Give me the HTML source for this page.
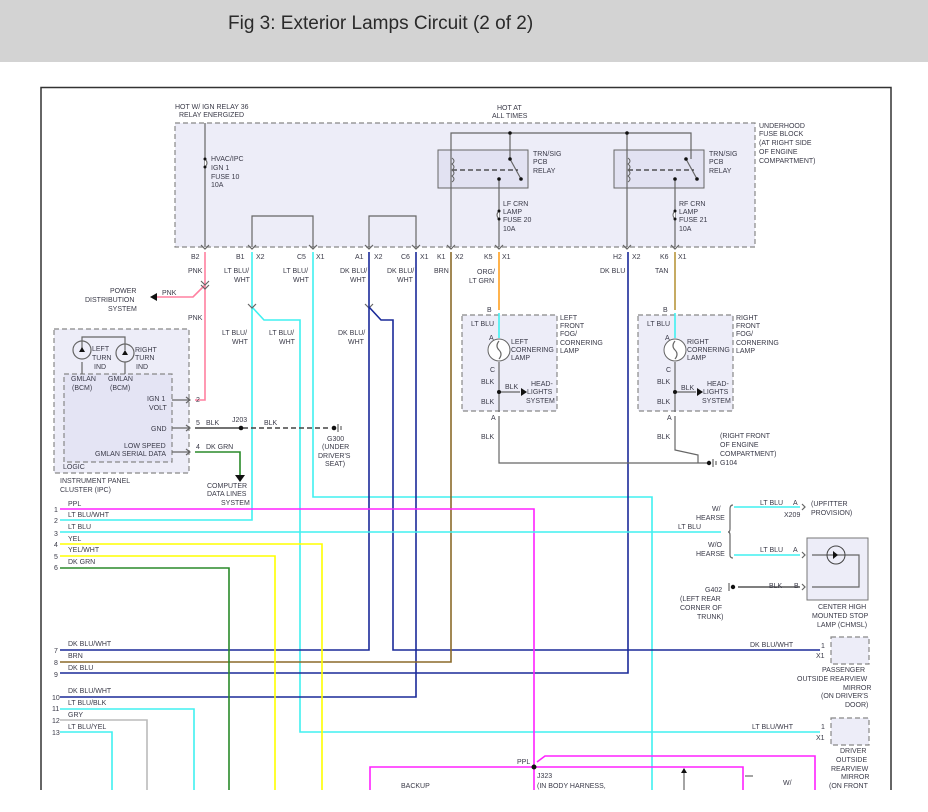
<!DOCTYPE html>
<html><head><meta charset="utf-8"><style>
html,body{margin:0;padding:0;background:#fff;width:928px;height:812px;overflow:hidden}
svg{display:block}
text{font-family:"Liberation Sans",sans-serif;font-size:7px;fill:#3a3a48}
.t{font-size:19px;fill:#2a2a2a}
.w{fill:none;stroke-width:1.6}
.g{stroke:#666;fill:none;stroke-width:1.2}
.d{stroke:#888;stroke-dasharray:5 3;stroke-width:1.2}
</style></head><body>
<svg width="928" height="812" viewBox="0 0 928 812" xmlns="http://www.w3.org/2000/svg">
<rect x="0" y="0" width="928" height="62" fill="#d3d3d3"/>
<text class="t" x="228" y="29">Fig 3: Exterior Lamps Circuit (2 of 2)</text>
<path d="M41 812 V87.5 H891 V812" fill="none" stroke="#333" stroke-width="1.5"/>
<rect x="0" y="790" width="928" height="22" fill="#fff"/>

<!-- fuse block -->
<rect x="175" y="123" width="580" height="124" fill="#ededf8" class="d"/>
<rect x="438" y="150" width="90" height="38" fill="#e2e2f2" stroke="#666"/>
<rect x="614" y="150" width="90" height="38" fill="#e2e2f2" stroke="#666"/>
<g class="g">
<path d="M205 123 V247"/>
<path d="M252 247 V216 H313 V247"/>
<path d="M369 247 V216 H416 V247"/>
<path d="M451 247 V133 H691 V159"/>
<path d="M510 133 V159"/>
<path d="M627 133 V247"/>
<path d="M510 159 L521 179"/><path d="M686 159 L697 179"/>
<path d="M499 179 V247"/><path d="M675 179 V247"/>
</g>
<path d="M452 170 H518 M628 170 H694" stroke="#333" stroke-dasharray="5 3" stroke-width="1.2"/>
<path d="M452 158 q4 3 0 6 q4 3 0 6 q4 3 0 6 q4 3 0 6 M628 158 q4 3 0 6 q4 3 0 6 q4 3 0 6 q4 3 0 6" stroke="#666" fill="none"/>
<path d="M205 159 q4 4 0 8 M499 211 q-4 4 0 8 M675 211 q-4 4 0 8" stroke="#666" fill="#fff"/>
<g fill="#111"><circle cx="510" cy="133" r="1.8"/><circle cx="627" cy="133" r="1.8"/><circle cx="510" cy="159" r="1.8"/><circle cx="521" cy="179" r="1.8"/><circle cx="686" cy="159" r="1.8"/><circle cx="697" cy="179" r="1.8"/><circle cx="499" cy="179" r="1.8"/><circle cx="675" cy="179" r="1.8"/><circle cx="205" cy="159" r="1.5"/><circle cx="205" cy="167" r="1.5"/><circle cx="499" cy="211" r="1.5"/><circle cx="499" cy="219" r="1.5"/><circle cx="675" cy="211" r="1.5"/><circle cx="675" cy="219" r="1.5"/></g>
<text x="175" y="109">HOT W/ IGN RELAY 36</text><text x="179" y="117">RELAY ENERGIZED</text>
<text x="497" y="110">HOT AT</text><text x="492" y="118">ALL TIMES</text>
<text x="211" y="161">HVAC/IPC</text><text x="211" y="170">IGN 1</text><text x="211" y="179">FUSE 10</text><text x="211" y="187">10A</text>
<text x="533" y="156">TRN/SIG</text><text x="533" y="164">PCB</text><text x="533" y="173">RELAY</text>
<text x="709" y="156">TRN/SIG</text><text x="709" y="164">PCB</text><text x="709" y="173">RELAY</text>
<text x="503" y="206">LF CRN</text><text x="503" y="214">LAMP</text><text x="503" y="222">FUSE 20</text><text x="503" y="231">10A</text>
<text x="679" y="206">RF CRN</text><text x="679" y="214">LAMP</text><text x="679" y="222">FUSE 21</text><text x="679" y="231">10A</text>
<text x="759" y="128">UNDERHOOD</text><text x="759" y="136">FUSE BLOCK</text><text x="759" y="145">(AT RIGHT SIDE</text><text x="759" y="154">OF ENGINE</text><text x="759" y="163">COMPARTMENT)</text>
<text x="191" y="259">B2</text><text x="236" y="259">B1</text><text x="256" y="259">X2</text><text x="297" y="259">C5</text><text x="316" y="259">X1</text><text x="355" y="259">A1</text><text x="374" y="259">X2</text><text x="401" y="259">C6</text><text x="420" y="259">X1</text><text x="437" y="259">K1</text><text x="455" y="259">X2</text><text x="484" y="259">K5</text><text x="502" y="259">X1</text><text x="613" y="259">H2</text><text x="632" y="259">X2</text><text x="660" y="259">K6</text><text x="678" y="259">X1</text>
<g class="g"><path d="M201 245 l4 4 4-4 M248 245 l4 4 4-4 M309 245 l4 4 4-4 M365 245 l4 4 4-4 M412 245 l4 4 4-4 M447 245 l4 4 4-4 M495 245 l4 4 4-4 M623 245 l4 4 4-4 M671 245 l4 4 4-4"/></g>

<!-- wires -->
<path class="w" stroke="#ff80a0" d="M205 252 V400 H195 M205 285 L193 297 H152"/>
<path d="M150 297 l7 -4 v8z" fill="#111"/>
<path class="g" d="M201 281 l4 4 4-4 M201 285 l4 4 4-4"/>
<path class="w" stroke="#40f0f0" d="M252 252 V520 H60 M252 307 L264 320 H300 V732 H820 M313 252 V497 H652 V790"/>
<path class="g" d="M248 304 l4 4 4-4 M365 304 l4 4 4-4"/>
<path class="w" stroke="#1a2a99" d="M369 252 V650 H60 M369 307 L381 320 H393 V650 H820 M416 252 V697 H60"/>
<path class="w" stroke="#8b6a2a" d="M451 252 V662 H60"/>
<path class="w" stroke="#ffa020" d="M499 252 V310"/>
<path class="w" stroke="#1a2a99" d="M628 252 V673 H60"/>
<path class="w" stroke="#b8963c" d="M675 252 V310"/>
<path class="w" stroke="#ff22ff" d="M60 509 H534 V790 M370 790 V767 H743 V790 M537 762 L545 756 H815 V790"/>
<circle cx="534" cy="767" r="2.5" fill="#111"/>
<path class="w" stroke="#40f0f0" d="M60 532 H721 M734 507 H800 M734 555 H800"/>
<path class="w" stroke="#ffff00" d="M60 544 H322 V790 M60 556 H275 V790"/>
<path class="w" stroke="#2a8a2a" d="M60 568 H229 V790"/>
<path class="w" stroke="#40f0f0" d="M60 709 H194 V790 M60 732 H112 V790"/>
<path class="w" stroke="#bbbbbb" d="M60 720 H147 V790"/>
<path class="g" d="M684 790 V772"/><path d="M684 768 l-3 5 h6z" fill="#111"/>
<path class="g" d="M745 776 H753"/>

<g>
<text x="68" y="506">PPL</text><text x="68" y="517">LT BLU/WHT</text><text x="68" y="529">LT BLU</text><text x="68" y="541">YEL</text><text x="68" y="552">YEL/WHT</text><text x="68" y="564">DK GRN</text>
<text x="68" y="646">DK BLU/WHT</text><text x="68" y="658">BRN</text><text x="68" y="670">DK BLU</text><text x="68" y="693">DK BLU/WHT</text><text x="68" y="705">LT BLU/BLK</text><text x="68" y="717">GRY</text><text x="68" y="729">LT BLU/YEL</text>
<text x="54" y="512">1</text><text x="54" y="523">2</text><text x="54" y="536">3</text><text x="54" y="547">4</text><text x="54" y="559">5</text><text x="54" y="570">6</text><text x="54" y="653">7</text><text x="54" y="665">8</text><text x="54" y="677">9</text><text x="52" y="700">10</text><text x="52" y="711">11</text><text x="52" y="723">12</text><text x="52" y="735">13</text>
</g>
<text x="188" y="273">PNK</text><text x="188" y="320">PNK</text><text x="162" y="295">PNK</text>
<text x="110" y="293">POWER</text><text x="85" y="302">DISTRIBUTION</text><text x="108" y="311">SYSTEM</text>
<text x="224" y="273">LT BLU/</text><text x="234" y="282">WHT</text><text x="283" y="273">LT BLU/</text><text x="293" y="282">WHT</text>
<text x="340" y="273">DK BLU/</text><text x="350" y="282">WHT</text><text x="387" y="273">DK BLU/</text><text x="397" y="282">WHT</text><text x="434" y="273">BRN</text>
<text x="477" y="274">ORG/</text><text x="469" y="283">LT GRN</text><text x="600" y="273">DK BLU</text><text x="655" y="273">TAN</text>
<text x="222" y="335">LT BLU/</text><text x="232" y="344">WHT</text><text x="269" y="335">LT BLU/</text><text x="279" y="344">WHT</text><text x="338" y="335">DK BLU/</text><text x="348" y="344">WHT</text>

<!-- IPC -->
<rect x="54" y="329" width="135" height="144" fill="#ededf8" class="d"/>
<rect x="64" y="374" width="108" height="88" fill="#e4e4f4" class="d"/>
<g class="g"><path d="M82 350 V337 H125 V350 M82 362 V374 M125 362 V374 M172 400 H190 M172 428 H190 M172 452 H190"/>
<circle cx="82" cy="350" r="9"/><circle cx="125" cy="353" r="9"/>
<path d="M186 397 l4 3 -4 3 M186 425 l4 3 -4 3 M186 449 l4 3 -4 3"/></g>
<path d="M79 352 l3 -5 3 5z M122 355 l3 -5 3 5z" fill="#111"/>
<text x="92" y="351">LEFT</text><text x="92" y="360">TURN</text><text x="94" y="369">IND</text>
<text x="135" y="352">RIGHT</text><text x="135" y="360">TURN</text><text x="136" y="369">IND</text>
<text x="71" y="381">GMLAN</text><text x="72" y="390">(BCM)</text><text x="108" y="381">GMLAN</text><text x="110" y="390">(BCM)</text>
<text x="147" y="401">IGN 1</text><text x="149" y="410">VOLT</text><text x="151" y="431">GND</text><text x="124" y="448">LOW SPEED</text><text x="95" y="456">GMLAN SERIAL DATA</text>
<text x="63" y="469">LOGIC</text><text x="60" y="483">INSTRUMENT PANEL</text><text x="60" y="492">CLUSTER (IPC)</text>
<text x="196" y="402">2</text><text x="196" y="425">5</text><text x="196" y="449">4</text>
<path d="M195 428 H235" stroke="#444" stroke-width="1.5"/>
<path d="M235 428 H330" stroke="#444" stroke-width="1.5" stroke-dasharray="5 3"/>
<circle cx="241" cy="428" r="2.3" fill="#111"/><circle cx="334" cy="428" r="2.3" fill="#111"/>
<path class="g" d="M338 424 v8 M341 426 v4"/>
<text x="206" y="425">BLK</text><text x="232" y="422">J203</text><text x="264" y="425">BLK</text>
<text x="327" y="441">G300</text><text x="322" y="449">(UNDER</text><text x="318" y="458">DRIVER'S</text><text x="325" y="466">SEAT)</text>
<path class="w" stroke="#2a8a2a" d="M195 452 H240 V475"/><path d="M235 475 h10 l-5 7z" fill="#111"/>
<text x="206" y="449">DK GRN</text>
<text x="207" y="488">COMPUTER</text><text x="207" y="496">DATA LINES</text><text x="221" y="505">SYSTEM</text>

<!-- lamps -->
<rect x="462" y="315" width="95" height="96" fill="#ededf8" class="d"/>
<rect x="638" y="315" width="95" height="96" fill="#ededf8" class="d"/>
<path class="w" stroke="#40f0f0" d="M499 313 V338 M675 313 V338"/>
<path class="g" d="M499 362 V412 H499 M499 392 H520 M675 362 V412 M675 392 H696 M499 416 V463 H708 M675 416 V450 L698 455 V463 H708"/>
<circle cx="499" cy="350" r="11" fill="#fff" stroke="#666"/><circle cx="675" cy="350" r="11" fill="#fff" stroke="#666"/>
<path class="g" d="M499 341 q-4 5 0 9 q4 4 0 9 M675 341 q-4 5 0 9 q4 4 0 9"/>
<circle cx="499" cy="392" r="2" fill="#111"/><circle cx="675" cy="392" r="2" fill="#111"/>
<path d="M521 388 l6 4 -6 4z M697 388 l6 4 -6 4z" fill="#111"/>
<circle cx="709" cy="463" r="2.2" fill="#111"/><path class="g" d="M713 459 v8 M716 461 v4"/>
<text x="487" y="312">B</text><text x="663" y="312">B</text>
<text x="471" y="326">LT BLU</text><text x="647" y="326">LT BLU</text><text x="489" y="340">A</text><text x="665" y="340">A</text>
<text x="511" y="344">LEFT</text><text x="511" y="352">CORNERING</text><text x="511" y="360">LAMP</text>
<text x="687" y="344">RIGHT</text><text x="687" y="352">CORNERING</text><text x="687" y="360">LAMP</text>
<text x="560" y="320">LEFT</text><text x="560" y="328">FRONT</text><text x="560" y="336">FOG/</text><text x="560" y="345">CORNERING</text><text x="560" y="353">LAMP</text>
<text x="736" y="320">RIGHT</text><text x="736" y="328">FRONT</text><text x="736" y="336">FOG/</text><text x="736" y="345">CORNERING</text><text x="736" y="353">LAMP</text>
<text x="490" y="372">C</text><text x="666" y="372">C</text><text x="481" y="384">BLK</text><text x="657" y="384">BLK</text><text x="505" y="389">BLK</text><text x="681" y="390">BLK</text>
<text x="531" y="386">HEAD-</text><text x="527" y="394">LIGHTS</text><text x="526" y="403">SYSTEM</text>
<text x="707" y="386">HEAD-</text><text x="703" y="394">LIGHTS</text><text x="702" y="403">SYSTEM</text>
<text x="481" y="404">BLK</text><text x="657" y="404">BLK</text><text x="491" y="420">A</text><text x="667" y="420">A</text>
<text x="481" y="439">BLK</text><text x="657" y="439">BLK</text>
<text x="720" y="438">(RIGHT FRONT</text><text x="720" y="447">OF ENGINE</text><text x="720" y="456">COMPARTMENT)</text><text x="720" y="465">G104</text>

<!-- right lower -->
<path class="g" d="M733 505 q-3 0 -3 4 v20 q0 3 -2 3 q2 0 2 3 v20 q0 3 3 3"/>
<text x="712" y="511">W/</text><text x="696" y="520">HEARSE</text><text x="678" y="529">LT BLU</text><text x="708" y="547">W/O</text><text x="696" y="556">HEARSE</text>
<text x="760" y="505">LT BLU</text><text x="793" y="505">A</text><text x="784" y="517">X209</text><text x="811" y="506">(UPFITTER</text><text x="811" y="515">PROVISION)</text>
<text x="760" y="552">LT BLU</text><text x="793" y="552">A</text>
<rect x="807" y="538" width="61" height="62" fill="#ededf8" stroke="#777"/>
<path class="g" d="M802 504 l3 3 -3 3 M802 552 l3 3 -3 3 M802 584 l3 3 -3 3 M812 555 H859 V587 H812"/>
<circle cx="836" cy="555" r="9" fill="none" stroke="#444"/><path d="M833 551 l5 4 -5 4z" fill="#111"/>
<path d="M738 587 H800" stroke="#555" stroke-width="1.5"/><circle cx="733" cy="587" r="2.2" fill="#111"/><path class="g" d="M729 583 v8"/>
<text x="705" y="592">G402</text><text x="680" y="601">(LEFT REAR</text><text x="680" y="610">CORNER OF</text><text x="697" y="619">TRUNK)</text>
<text x="769" y="588">BLK</text><text x="794" y="588">B</text>
<text x="818" y="609">CENTER HIGH</text><text x="812" y="618">MOUNTED STOP</text><text x="817" y="627">LAMP (CHMSL)</text>
<rect x="831" y="637" width="38" height="27" fill="#ededf8" class="d"/>
<rect x="831" y="718" width="38" height="27" fill="#ededf8" class="d"/>
<text x="750" y="647">DK BLU/WHT</text><text x="821" y="648">1</text><text x="816" y="658">X1</text>
<text x="822" y="672">PASSENGER</text><text x="797" y="681">OUTSIDE REARVIEW</text><text x="843" y="690">MIRROR</text><text x="821" y="698">(ON DRIVER'S</text><text x="845" y="707">DOOR)</text>
<text x="752" y="729">LT BLU/WHT</text><text x="821" y="729">1</text><text x="816" y="740">X1</text>
<text x="840" y="753">DRIVER</text><text x="836" y="762">OUTSIDE</text><text x="831" y="771">REARVIEW</text><text x="841" y="779">MIRROR</text><text x="829" y="788">(ON FRONT</text>
<text x="783" y="785">W/</text>
<text x="517" y="764">PPL</text><text x="537" y="778">J323</text><text x="537" y="788">(IN BODY HARNESS,</text><text x="401" y="788">BACKUP</text>
</svg>
</body></html>
